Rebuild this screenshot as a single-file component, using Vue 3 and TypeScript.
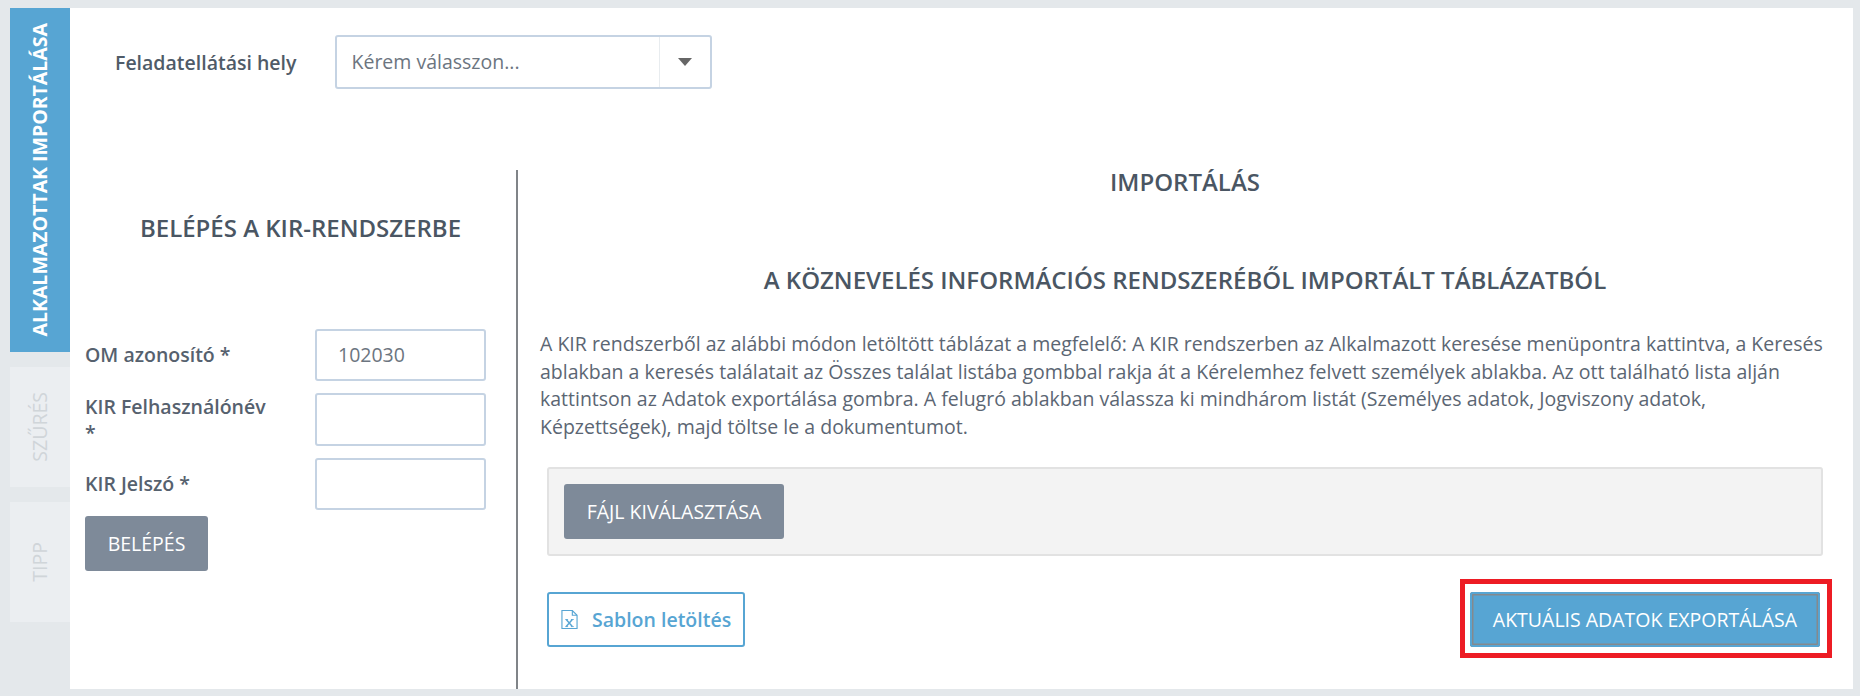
<script setup lang="ts">
const tabs = [
  { label: 'ALKALMAZOTTAK IMPORTÁLÁSA', cls: 'tab-active' },
  { label: 'SZŰRÉS', cls: 'tab-second' },
  { label: 'TIPP', cls: 'tab-third' },
]
const fields = [
  { label: 'OM azonosító *', value: '102030', tall: false },
  { label: 'KIR Felhasználónév *', value: '', tall: true },
  { label: 'KIR Jelszó *', value: '', tall: false },
]
</script>

<template>
  <div class="page">
    <nav class="tabs">
      <div v-for="t in tabs" :key="t.label" class="tab" :class="t.cls">
        <span class="tab-text">{{ t.label }}</span>
      </div>
    </nav>
    <main class="panel">
      <div class="place-row">
        <span class="place-label">Feladatellátási hely</span>
        <div class="select">
          <span class="select-text">Kérem válasszon...</span>
          <span class="select-arrow"><i class="caret"></i></span>
        </div>
      </div>
      <div class="columns">
        <section class="login">
          <h2 class="login-title">BELÉPÉS A KIR-RENDSZERBE</h2>
          <div class="fields">
            <div v-for="f in fields" :key="f.label" class="field">
              <label class="field-label">{{ f.label }}</label>
              <div class="input" :class="{ 'input-tall': f.tall }">{{ f.value }}</div>
            </div>
          </div>
          <button class="btn btn-grey login-btn" type="button">BELÉPÉS</button>
        </section>
        <section class="import">
          <h2 class="import-title">IMPORTÁLÁS</h2>
          <h2 class="import-sub">A KÖZNEVELÉS INFORMÁCIÓS RENDSZERÉBŐL IMPORTÁLT TÁBLÁZATBÓL</h2>
          <p class="desc">A KIR rendszerből az alábbi módon letöltött táblázat a megfelelő: A KIR rendszerben az Alkalmazott keresése menüpontra kattintva, a Keresés ablakban a keresés találatait az Összes találat listába gombbal rakja át a Kérelemhez felvett személyek ablakba. Az ott található lista alján kattintson az Adatok exportálása gombra. A felugró ablakban válassza ki mindhárom listát (Személyes adatok, Jogviszony adatok, Képzettségek), majd töltse le a dokumentumot.</p>
          <div class="well">
            <button class="btn btn-grey file-btn" type="button">FÁJL KIVÁLASZTÁSA</button>
          </div>
          <div class="actions">
            <button class="sablon" type="button">
              <svg class="xls" width="17" height="21" viewBox="0 0 18 21" fill="none" stroke="#57a5d3" stroke-width="1.2">
                <path d="M1 1h11l5 5v14H1z" />
                <path d="M12 1v5h5" />
                <path d="M5.5 10.5l6.5 7.5M12 10.5l-6.5 7.5" stroke-width="1.5" />
                <path d="M4.5 10.5h3M10.5 10.5h3M4.5 18h3M10.5 18h3" stroke-width="0.9" />
              </svg>
              Sablon letöltés
            </button>
            <div class="export-wrap">
              <button class="export" type="button">AKTUÁLIS ADATOK EXPORTÁLÁSA</button>
              <span class="marker"></span>
            </div>
          </div>
        </section>
      </div>
    </main>
  </div>
</template>

<style>
html, body { margin: 0; background: #e4e8eb; }
</style>

<style scoped>
.page {
  display: flex;
  width: 1860px;
  height: 696px;
  box-sizing: border-box;
  padding: 8px 7px 7px 10px;
  background: #e4e8eb;
  font-family: "Open Sans", sans-serif;
  font-size: 19.5px;
  color: #5b6673;
  overflow: hidden;
}
.tabs { display: flex; flex-direction: column; width: 60px; flex: none; }
.tab {
  display: flex;
  align-items: center;
  justify-content: center;
  width: 60px;
  box-sizing: border-box;
  padding-right: 2px;
}
.tab-text { writing-mode: vertical-rl; transform: rotate(180deg); white-space: nowrap; }
.tab-active { height: 344px; background: #57a5d3; color: #fff; font-weight: 700; }
.tab-second, .tab-third { height: 120px; background: #ebeef1; color: #d0d5d9; }
.tab-second { margin-top: 15px; }
.tab-third { margin-top: 15px; }
.panel { flex: 1; background: #fff; display: flex; flex-direction: column; min-width: 0; }
.place-row { display: flex; align-items: center; height: 54px; margin-top: 27px; }
.place-label { margin-left: 45px; width: 219.5px; font-weight: 600; color: #4f5b68; }
.select {
  display: flex;
  width: 377px;
  height: 54px;
  box-sizing: border-box;
  border: 2px solid #c5d3e3;
  border-radius: 3px;
}
.select-text { flex: 1; padding-left: 15px; line-height: 50px; color: #6c7580; }
.select-arrow {
  width: 50px;
  border-left: 1px solid #e8ecef;
  display: flex;
  align-items: center;
  justify-content: center;
}
.caret {
  width: 0;
  height: 0;
  border-left: 7px solid transparent;
  border-right: 7px solid transparent;
  border-top: 8px solid #666;
}
.columns { flex: 1; display: flex; margin-top: 81px; min-height: 0; }
.login {
  width: 448px;
  flex: none;
  box-sizing: border-box;
  padding-left: 15px;
  border-right: 2px solid #808488;
}
.login-title, .import-title, .import-sub {
  margin: 0;
  font-size: 24px;
  font-weight: 600;
  line-height: 28px;
  text-align: center;
  color: #4a5663;
}
.login-title { margin-top: 44px; }
.fields { margin-top: 87px; display: flex; flex-direction: column; gap: 12px; }
.field { display: flex; align-items: center; }
.field-label {
  width: 190px;
  margin-right: 40px;
  font-weight: 600;
  line-height: 26px;
  color: #56616e;
}
.input {
  width: 171px;
  height: 52px;
  box-sizing: border-box;
  border: 2px solid #c5d3e3;
  border-radius: 3px;
  padding-left: 21px;
  line-height: 48px;
  color: #6c7580;
}
.input-tall { height: 53px; }
.btn {
  border: 0;
  border-radius: 3px;
  height: 55px;
  font-family: inherit;
  font-size: 19.5px;
  color: #fff;
  padding: 0;
}
.btn-grey { background: #7e8a99; }
.login-btn { display: block; width: 123px; margin-top: 6px; }
.import { flex: 1; min-width: 0; padding-left: 1px; padding-right: 2px; }
.import-title { margin-top: -2px; }
.import-sub { margin-top: 70px; }
.desc {
  margin: 36px 28px 0 21px;
  line-height: 27.7px;
  color: #5b6673;
}
.well {
  margin: 26px 28px 0;
  height: 89px;
  box-sizing: border-box;
  border: 2px solid #e2e2e2;
  border-radius: 3px;
  background: #f3f3f3;
  padding: 15px;
}
.file-btn { display: block; width: 220px; }
.actions {
  margin: 36px 31px 0 28px;
  display: flex;
  justify-content: space-between;
  align-items: flex-start;
}
.sablon {
  display: flex;
  align-items: center;
  width: 198px;
  height: 55px;
  box-sizing: border-box;
  padding: 0 0 0 12px;
  gap: 14px;
  background: #fff;
  border: 2px solid #57a5d3;
  border-radius: 3px;
  color: #57a5d3;
  font-family: inherit;
  font-size: 19.5px;
  font-weight: 600;
}
.xls { flex: none; }
.export-wrap { position: relative; }
.export {
  display: block;
  width: 350px;
  height: 55px;
  padding: 0;
  border: 0;
  border-radius: 3px;
  background: #57a5d3;
  box-shadow: inset 0 0 0 2px #57a5d3, inset 0 0 0 3.5px #85898d;
  color: #fff;
  font-family: inherit;
  font-size: 19.5px;
}
.marker {
  position: absolute;
  inset: -13px -12px -11px -10px;
  border: 5px solid #ed1c24;
  pointer-events: none;
}
</style>
